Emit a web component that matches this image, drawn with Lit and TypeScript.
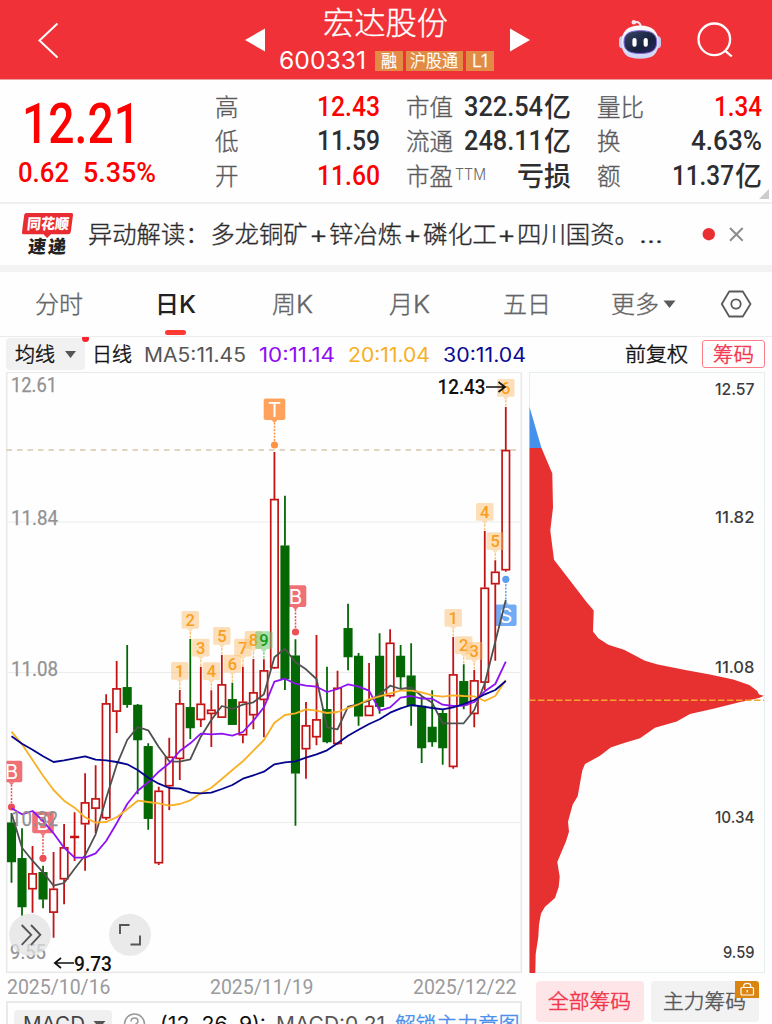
import { LitElement, html, svg, css } from "lit";
import { customElement } from "lit/decorators.js";

type Candle = [up: boolean, high: number, top: number, bottom: number, low: number];

const label = (cls: string, text: string, w: number, h: number, base: number) => html`
  <svg class="t ${cls}" width=${w} height=${h}><text x="0" y=${base} textLength=${w} lengthAdjust="spacingAndGlyphs">${text}</text></svg>`;

const textStyles = css`
  :host { display: block; }
  .t { display: block; flex: none; overflow: visible; fill: currentColor; font-family: Roboto, "Noto Sans CJK SC", sans-serif; white-space: pre; }
  .cjk { font-family: "Noto Sans CJK SC", sans-serif; }
  .inter { font-family: Inter, "Noto Sans CJK SC", sans-serif; }
  .soft { font-weight: 300; stroke: currentColor; stroke-width: 0.35px; }
`;

@customElement("stock-header")
class StockHeader extends LitElement {
  static styles = [textStyles, css`
    header { height: 79px; background: #f03137; border-bottom: 1px solid #e9a0a2; color: #fff; display: grid; grid-template-columns: 245px 20px 242px 23px 89px 42px 36px 38px; box-sizing: content-box; }
    header > svg { display: block; }
    .mid { display: flex; flex-direction: column; align-items: center; }
    .title { font-size: 31px; margin-right: 2px; }
    .sub { display: flex; align-items: flex-start; }
    .code { font-size: 24px; margin-right: 9px; font-weight: 400; }
    .tag { background: #e18b45; height: 20px; display: flex; justify-content: center; margin-right: 3px; }
    .tag:last-child { margin-right: 0; }
    .w1 { width: 28px; } .w3 { width: 57px; } .wl { width: 28px; }
    .tagtext { font-size: 17px; }
  `];
  render() {
    return html`<header>
      <svg width="245" height="79"><path d="M57.5 23.5L39.5 40.5L57.5 57.5" fill="none" stroke="#fff" stroke-width="2"/></svg>
      <svg width="20" height="79"><path d="M0 40L20 28.5V51.5Z" fill="#fff"/></svg>
      <div class="mid">
        ${label("title cjk soft", "宏达股份", 125, 51, 34)}
        <div class="sub">
          ${label("code inter", "600331", 87, 20, 18)}
          <div class="tag w1">${label("tagtext cjk soft", "融", 16, 20, 16)}</div>
          <div class="tag w3">${label("tagtext cjk soft", "沪股通", 48, 20, 16)}</div>
          <div class="tag wl">${label("tagtext inter soft", "L1", 16, 20, 16)}</div>
        </div>
      </div>
      <svg width="23" height="79"><path d="M23 40L3 28.5V51.5Z" fill="#fff"/></svg>
      <span></span>
      <svg width="42" height="79" viewBox="619 0 42 79">
        <defs>
          <linearGradient id="shell" x2="0" y2="1"><stop stop-color="#fff"/><stop offset="1" stop-color="#ccd2f5"/></linearGradient>
          <linearGradient id="face" x2="1" y2="1"><stop stop-color="#384766"/><stop offset=".6" stop-color="#17213d"/><stop offset="1" stop-color="#2a2668"/></linearGradient>
        </defs>
        <path d="M633.5 22.5Q640.5 20.5 640.6 27" fill="none" stroke="#f7eaf2" stroke-width="2"/>
        <circle cx="633.8" cy="22.3" r="2.2" fill="#f4e8ee"/>
        <rect x="619" y="36" width="8" height="12.5" rx="4" fill="#c9c9ed"/>
        <rect x="653" y="36" width="8" height="12.5" rx="4" fill="#c9c9ed"/>
        <path d="M640 25.5C653 25.5 658.5 32 658.5 42C658.5 54 653 58.8 640 58.8S621.5 54 621.5 42C621.5 32 627 25.5 640 25.5Z" fill="url(#shell)"/>
        <path d="M640.3 30.7C652 30.7 656.7 34 656.7 42C656.7 50 652 53.5 640.3 53.5S624 50 624 42C624 34 629 30.7 640.3 30.7Z" fill="url(#face)" stroke="#7a62dc" stroke-width="1"/>
        <rect x="632.4" y="38" width="4.2" height="8.8" rx="2" fill="#fff"/>
        <rect x="643.6" y="38" width="4.2" height="8.8" rx="2" fill="#fff"/>
      </svg>
      <span></span>
      <svg width="38" height="79" viewBox="697 0 38 79"><g fill="none" stroke="#fff" stroke-width="2.3"><circle cx="714.3" cy="39.3" r="15.8"/><path d="M725.3 50.8L731.8 56.5"/></g></svg>
    </header>`;
  }
}

@customElement("quote-panel")
class QuotePanel extends LitElement {
  static styles = [textStyles, css`
    section { height: 122px; position: relative; display: grid; grid-template-columns: 189px 165px 165px 165px; column-gap: 26px; color: #2e2e30; border-bottom: 2px solid #efefef; }
    .main { color: #fd0100; }
    .price { font-size: 55.5px; font-weight: 500; margin-left: 21.5px; }
    .change { display: flex; gap: 14px; padding-left: 18px; }
    .num { font-size: 27px; font-weight: 500; }
    .unit { font-size: 27px; font-weight: 500; margin-left: 1px; }
    .col { padding-top: 10px; }
    .row { height: 34.3px; display: flex; justify-content: space-between; }
    .name { font-size: 23.5px; color: #5a5a5c; }
    .pair { display: flex; }
    .up { color: #fd0100; }
    .ttm { font-size: 15.5px; font-weight: 300; color: #666; margin-left: 2px; }
    .corner { position: absolute; right: 3px; bottom: 3px; width: 10px; height: 10px; background: #ccc; clip-path: polygon(100% 0, 100% 100%, 0 100%); }
  `];
  val(v: any[]) {
    const [txt, w, up, unit] = v;
    return html`<div class="pair ${up ? "up" : ""}">${txt ? label("num", txt, w, 34, 26) : ""}${unit ? label("unit cjk", unit, unit.length * 27, 34, 26.5) : ""}</div>`;
  }
  render() {
    const cols: any[][][] = [
      [["高", ["12.43", 63, true]], ["低", ["11.59", 63]], ["开", ["11.60", 63, true]]],
      [["市值", ["322.54", 79, false, "亿"]], ["流通", ["248.11", 79, false, "亿"]], ["市盈", ["", 0, false, "亏损"]]],
      [["量比", ["1.34", 48, true]], ["换", ["4.63%", 71]], ["额", ["11.37", 62, false, "亿"]]],
    ];
    return html`<section>
      <div class="main">
        ${label("price", "12.21", 118, 80, 62.5)}
        <div class="change">${label("num", "0.62", 51, 30, 22)}${label("num", "5.35%", 73, 30, 22)}</div>
      </div>
      ${cols.map(c => html`<div class="col">${c.map(([n, v]) => html`<div class="row">
        <div class="pair">${label("name cjk soft", n, n.length * 23.5, 34, 26)}${n === "市盈" ? label("ttm inter", "TTM", 31, 34, 20.5) : ""}</div>${this.val(v)}</div>`)}</div>`)}
      <i class="corner"></i>
    </section>`;
  }
}

@customElement("news-strip")
class NewsStrip extends LitElement {
  static styles = [textStyles, css`
    section { height: 61px; border-bottom: 7px solid #f3f3f3; display: grid; grid-template-columns: 88px 614px 28px 1fr; }
    svg { display: block; overflow: visible; }
    .news { font: 300 24.3px Inter, "Noto Sans CJK SC", sans-serif; fill: #2c2c2e; stroke: #2c2c2e; stroke-width: 0.35px; }
    .logo { font: 900 18px "Noto Sans CJK SC", sans-serif; }
  `];
  render() {
    const parts: [string, number, number][] = [
      ["异动解读：", 88, 121.5], ["多龙铜矿", 210.5, 97], ["+", 309, 19], ["锌冶炼", 329, 73], ["+", 403, 19],
      ["磷化工", 423, 74], ["+", 497, 19], ["四川国资。", 517, 122], ["…", 639, 24],
    ];
    return html`<section>
      <svg width="88" height="61" viewBox="0 204 88 61" class="logo">
        <path d="M26.5 213H71.5Q73.4 213 73 215L70.8 232Q70.4 234.3 68 234.3H51L47 238L43.5 234.3H24Q21.7 234.3 22 232L24.2 215Q24.5 213 26.5 213Z" fill="#e82c31"/>
        <text transform="translate(26.5 229.3) skewX(-6)" font-size="14.5" textLength="42" lengthAdjust="spacingAndGlyphs" fill="#fff">同花顺</text>
        <text transform="translate(27.5 253) skewX(-6)" textLength="18" lengthAdjust="spacingAndGlyphs" fill="#222">速</text>
        <text transform="translate(47.5 253) skewX(-6)" textLength="18" lengthAdjust="spacingAndGlyphs" fill="#222">递</text>
      </svg>
      <svg width="614" height="61" viewBox="88 204 614 61" class="news">
        ${parts.map(([s, x, w]) => svg`<text x=${x} y="243" textLength=${w} lengthAdjust="spacingAndGlyphs">${s}</text>`)}
      </svg>
      <svg width="28" height="61" viewBox="702 204 28 61"><circle cx="708.8" cy="234.2" r="6.2" fill="#e92f31"/></svg>
      <svg width="42" height="61" viewBox="730 204 42 61"><path d="M730 228L742.7 240.7M742.7 228L730 240.7" stroke="#8c8c8c" stroke-width="2" fill="none"/></svg>
    </section>`;
  }
}

@customElement("period-tabs")
class PeriodTabs extends LitElement {
  static styles = [textStyles, css`
    nav { height: 64px; border-bottom: 1px solid #ebebeb; display: grid; grid-template-columns: 117px 117px 117px 117px 117px 187px; color: #646466; }
    .tab { display: flex; flex-direction: column; align-items: center; }
    .tab .pair { display: flex; }
    .zh { font-size: 24px; }
    .k { font-size: 24px; }
    .active { color: #222224; }
    .active .zh, .active .k { font-weight: 500; }
    .bar { width: 21px; height: 5px; border-radius: 2.5px; background: #fc3a32; margin-top: 1px; }
    .more { display: flex; padding-left: 25.5px; }
  `];
  render() {
    const tabs = ["分时", "日K", "周K", "月K", "五日"];
    return html`<nav>
      ${tabs.map((t, i) => {
        const soft = i === 1 ? "" : "soft";
        return html`<div class="tab ${i === 1 ? "active" : ""}">
        <div class="pair">${t.endsWith("K") ? html`${label("zh cjk " + soft, t[0], 24, 57, 41)}${label("k inter " + soft, "K", 17, 57, 41)}` : label("zh cjk " + soft, t, 48, 57, 41)}</div>
        ${i === 1 ? html`<i class="bar"></i>` : ""}</div>`;
      })}
      <div class="more">${label("zh cjk soft", "更多", 48, 57, 41)}
        <svg width="110" height="60" viewBox="659 272 110 60"><path d="M663.5 300.5H675.5L669.5 308Z" fill="#5a5a5c"/>
          <g fill="none" stroke="#5a5a5c" stroke-width="1.8"><path d="M729.2 291.5H742.8L750.5 304L742.8 316.5H729.2L721.8 304Z" stroke-linejoin="round"/><circle cx="736" cy="304" r="4.7"/></g></svg>
      </div>
    </nav>`;
  }
}

@customElement("ma-legend")
class MaLegend extends LitElement {
  static styles = [textStyles, css`
    section { height: 35px; display: flex; padding-left: 6px; overflow: hidden; }
    .pick { width: 79px; height: 32px; margin-top: 1px; background: #f1f1f1; border-radius: 4px; display: flex; padding-left: 9px; box-sizing: border-box; position: relative; }
    .pick svg { flex: none; }
    .dot { position: absolute; right: -4px; top: -3px; width: 7px; height: 7px; border-radius: 50%; background: #fb2230; }
    .txt { font-size: 19.5px; font-weight: 400; }
    .zh { font-size: 20px; color: #111; stroke-width: 0.5px; }
    .day { margin-left: 6.5px; }
    .m5 { margin-left: 12px; color: #555; } .m10 { margin-left: 13px; color: #8f0df5; } .m20 { margin-left: 13px; color: #f7b023; } .m30 { margin-left: 13px; color: #0b0a94; }
    .adj { margin-left: 99px; }
    .chips { width: 63.5px; height: 28px; margin: 3px 0 0 14px; border: 1px solid #ff7d88; border-radius: 3px; box-sizing: border-box; display: flex; justify-content: center; color: #f4374e; }
    .chips .zh { color: inherit; }
  `];
  render() {
    return html`<section>
      <div class="pick">${label("zh cjk soft", "均线", 40, 32, 23.5)}<svg width="26" height="32"><path d="M10 13H21L15.5 20Z" fill="#555"/></svg><i class="dot"></i></div>
      ${label("zh cjk soft day", "日线", 40, 35, 25)}
      ${label("txt inter m5", "MA5:11.45", 102, 35, 25)}
      ${label("txt inter m10", "10:11.14", 76, 35, 25)}
      ${label("txt inter m20", "20:11.04", 82, 35, 25)}
      ${label("txt inter m30", "30:11.04", 83, 35, 25)}
      ${label("zh cjk soft adj", "前复权", 63, 35, 25)}
      <div class="chips">${label("zh cjk soft", "筹码", 41, 26, 21)}</div>
    </section>`;
  }
}

const U = true, D = false;
const candles: Candle[] = [
  [D, 813.3, 822.7, 862, 882.7], [D, 828.3, 858.3, 907, 915.7], [U, 846, 873.3, 889.3, 912.7], [D, 865.7, 872.3, 899.3, 908.3],
  [U, 852, 888.7, 912.7, 937.7], [U, 824, 847.3, 879.3, 904.3], [U, 812.3, 836, 838, 861], [U, 773.3, 802.3, 824.3, 870.7],
  [U, 765.3, 798.3, 808.7, 833], [U, 694.3, 703.3, 818.3, 820], [U, 661, 688.3, 711.7, 733], [D, 645, 687.3, 704.7, 707.7],
  [D, 704, 705, 740, 794.3], [D, 743.3, 746.3, 818.7, 829.7], [U, 786.7, 790.7, 863.3, 865], [U, 737.7, 756.7, 786.3, 810],
  [U, 690, 703.3, 759, 780], [D, 639, 707.3, 728, 739], [U, 666.7, 703.7, 720, 727], [U, 690.3, 709.7, 714, 747],
  [U, 655, 684.3, 717.7, 718], [D, 682.7, 699.3, 724.7, 724.7], [U, 666.7, 701.7, 735.3, 743.3], [U, 659, 692.3, 715.3, 729.3],
  [U, 659.3, 670.3, 700, 737.3], [U, 452, 499, 668.3, 669], [D, 495.7, 545.7, 679, 690], [D, 639.3, 655.7, 773.3, 825.7],
  [U, 702, 725.3, 749.3, 778.7], [U, 635, 719.3, 737.3, 745.3], [D, 666.7, 709.3, 742, 743.3], [U, 670.7, 687.7, 744, 744.7],
  [D, 603.7, 628.3, 657, 670.3], [D, 653, 656, 716.3, 725.7], [U, 663, 705.7, 716, 716], [D, 633.3, 656, 706.7, 713.7],
  [U, 629.3, 642.7, 696.3, 697.7], [D, 645, 656, 677, 688], [D, 643.3, 675.7, 706, 725.7], [D, 696.7, 706, 748, 763],
  [D, 690.3, 727, 742, 746.7], [D, 708.7, 713.3, 748, 764.7], [U, 637, 674.3, 767, 768.7], [D, 664.3, 681.3, 705.3, 709.3],
  [U, 670, 680.3, 714, 727.3], [U, 531, 587.7, 682.7, 690], [U, 560.3, 571.7, 584.3, 660.7], [U, 407, 450, 570.3, 571.7],
];
const ma: [string, number[]][] = [
  ["#505050", [813.3, 847.7, 860.7, 872.3, 885.7, 883, 868.7, 855.3, 834.3, 798.3, 765, 740, 727, 730.3, 747, 761.3, 761.7, 759.3, 736.7, 720, 706, 709, 704.7, 702.3, 694.3, 657.3, 648.7, 662.3, 669.3, 679, 727.3, 729.3, 706.7, 704, 700.7, 694.3, 685.7, 689, 687.3, 696, 702.7, 723.3, 723.3, 723.3, 710, 683.3, 641.7, 600]],
  ["#8f12f2", [808.3, 814.3, 811, 821, 833.3, 847.7, 857.7, 857.7, 853.3, 841, 823.3, 804, 790.7, 782.3, 771.7, 763.3, 751, 743.3, 733.7, 734.3, 733.7, 735.7, 732, 720.7, 707.3, 681.7, 678.7, 683.7, 685.7, 686.7, 692, 689, 684.3, 686.7, 690.7, 710.7, 707.3, 697.7, 696, 698.7, 698.7, 704.7, 706, 705.7, 702, 691.3, 684, 661.7]],
  ["#f8b024", [731.7, 744.3, 760, 775.7, 790, 800.7, 807.7, 817.3, 822.7, 822, 817.3, 809.3, 800.7, 802, 803.3, 805.7, 804, 800.3, 793.3, 787.7, 779, 770, 761.3, 750.7, 740, 722.7, 715, 713.3, 709.3, 710.7, 713, 712, 708, 704.3, 699.3, 696.3, 693.3, 690.7, 690.7, 692.3, 695.3, 696.7, 695.3, 696, 696.3, 701, 696, 680]],
  ["#04048c", [736.3, 743.7, 749.7, 756.3, 762, 760.3, 758.3, 756.3, 759.7, 760.3, 762, 764.3, 770, 777.7, 783.7, 788, 788.7, 792.7, 793.3, 792.7, 789, 785, 778.7, 775.3, 771.7, 764.3, 762.3, 761.3, 757.7, 754.3, 750.3, 743.3, 735.7, 729.7, 724, 719.3, 712.7, 708.3, 705, 706.3, 708, 709.3, 707.3, 704, 700, 694.3, 690, 681]],
];
const cx = (i: number) => 11.5 + 10.517 * i;
const counts: [number, string][] = [[16, "1"], [17, "2"], [18, "3"], [19, "4"], [20, "5"], [21, "6"], [22, "7"], [23, "8"], [24, "9"], [42, "1"], [43, "2"], [44, "3"], [45, "4"], [46, "5"], [47, "6"]];

@customElement("k-chart")
class KChart extends LitElement {
  static styles = [textStyles, css`
    svg { display: block; font-family: Roboto, sans-serif; }
    .axis { font-size: 20px; font-weight: 400; fill: #929294; stroke: #929294; stroke-width: 0.25px; }
    .mark { font-size: 20px; font-weight: 500; fill: #111; }
    .sig { font: 400 20.5px Inter, sans-serif; fill: #fff; text-anchor: middle; }
    .cnt { font-size: 16.5px; font-weight: 500; text-anchor: middle; }
  `];
  signal(x: number, y: number, dot: number, ch: string, col: string, dotCol: string) {
    const below = dot < y;
    return svg`<g>
      <rect x=${x - 10.8} y=${y} width="21.6" height="21.6" rx="2" fill=${col}/>
      <path d=${below ? `M${x - 3} ${y}L${x} ${y - 3}L${x + 3} ${y}Z` : `M${x - 3} ${y + 21.6}L${x} ${y + 24.6}L${x + 3} ${y + 21.6}Z`} fill=${col}/>
      <path d=${below ? `M${x} ${dot + 5}V${y - 3}` : `M${x} ${y + 24}V${dot - 4}`} stroke=${dotCol} stroke-width="1.5" stroke-dasharray="2 1.3"/>
      <circle cx=${x} cy=${dot} r="3.6" fill=${dotCol}/>
      <text class="sig" x=${x} y=${y + 18.5}>${ch}</text></g>`;
  }
  count(i: number, ch: string) {
    const x = cx(i), hi = candles[i][1], y = hi - 28, green = ch === "9";
    const col = green ? "#6cc76f" : "#fbbe6c";
    return svg`<g><g fill=${col} fill-opacity=${green ? 0.55 : 0.48}><path d="M${x - 7.2} ${y}h14.4q1.5 0 1.5 1.5v14.8q0 1.5 -1.5 1.5h-4.2l-3 3.4l-3 -3.4h-4.2q-1.5 0 -1.5 -1.5v-14.8q0 -1.5 1.5 -1.5Z"/></g>
      <path d="M${x} ${y + 21}V${hi}" stroke=${col} stroke-width="1.3" stroke-dasharray="2.5 1.2"/>
      <text class="cnt" x=${x} y=${y + 15} fill=${green ? "#159a18" : "#fa9d1c"}>${ch}</text></g>`;
  }
  axis(s: string, x: number, y: number, w: number) {
    return svg`<text class="axis" x=${x} y=${y} textLength=${w} lengthAdjust="spacingAndGlyphs">${s}</text>`;
  }
  render() {
    return html`<svg width="529" height="602" viewBox="0 372 529 602">
      <defs><clipPath id="plot"><rect x="6.5" y="372" width="515" height="601"/></clipPath></defs>
      <path d="M7 522H521M7 672.5H521M7 822.5H521" stroke="#ececec" stroke-width="1.2"/>
      <rect x="6.7" y="372.3" width="514.6" height="600" fill="none" stroke="#e9e9e9" stroke-width="1.6"/>
      <path d="M6.5 450H517" stroke="#d9c8ac" stroke-width="1.4" stroke-dasharray="5.5 5"/>
      <g clip-path="url(#plot)">
        ${this.signal(11.5, 760.7, 807, "B", "#ef7075", "#ec5056")}
        ${this.signal(43, 811.7, 858.3, "B", "#ef7075", "#ec5056")}
        ${this.signal(274.5, 398.5, 445, "T", "#ffa35c", "#fd9345")}
        ${this.signal(295.5, 585.3, 632, "B", "#ef7075", "#ec5056")}
        ${this.signal(505.8, 604.4, 579.3, "S", "#72abf5", "#5c9ff0")}
        ${candles.map(([up, hi, top, bot, lo], i) => {
          const x = cx(i), c = up ? "#c31314" : "#046804";
          return svg`<path d="M${x} ${hi}V${top}M${x} ${bot}V${lo}" stroke=${c} stroke-width="1.8"/>
            <rect x=${x - 3.7} y=${top + 0.6} width="7.4" height=${Math.max(0.6, bot - top - 1.2)} fill=${up ? "none" : c} stroke=${c} stroke-width="1.7"/>`;
        })}
        ${counts.map(([i, ch]) => this.count(i, ch))}
        ${ma.map(([c, ys]) => svg`<polyline points=${ys.map((y, i) => `${cx(i)},${y}`).join(" ")} fill="none" stroke=${c} stroke-width="1.8" stroke-linejoin="round"/>`)}
      </g>
      ${this.axis("12.61", 11, 392, 46)}
      ${this.axis("11.84", 11, 525, 47)}
      ${this.axis("11.08", 11, 675.5, 47)}
      ${this.axis("10.32", 11, 826, 47)}
      ${this.axis("9.55", 10, 958.5, 36)}
      <text class="mark" x="437.5" y="394" textLength="48" lengthAdjust="spacingAndGlyphs">12.43</text>
      <path d="M486 387H504.5M498.5 382L505 387L498.5 392" fill="none" stroke="#111" stroke-width="1.7"/>
      <path d="M74 963H55.5M61 958L54.8 963L61 968" fill="none" stroke="#111" stroke-width="1.7"/>
      <text class="mark" x="74" y="970.5" textLength="38" lengthAdjust="spacingAndGlyphs">9.73</text>
      <circle cx="30" cy="934.8" r="21" fill="#e2e2e2" fill-opacity=".75"/>
      <circle cx="130" cy="934.8" r="21" fill="#e8e8e8" fill-opacity=".9"/>
      <g fill="none" stroke="#555" stroke-width="1.9"><path d="M21.7 925L31.2 934.8L21.7 944.8M31 925L40.3 934.8L31 944.8"/><path d="M120 934V925H129.5M140 935.5V944.5H130.5"/></g>
    </svg>`;
  }
}

const profile: [number, number][] = [[541.5, 448], [552.3, 473.4], [553, 507.6], [550.3, 530.6], [554, 559.8], [570, 580.6], [586.7, 602.3], [593.7, 610.6], [593, 631.5], [598.3, 638.2], [608.3, 644.8], [624, 649.8], [645, 660.7], [657.7, 664.4], [686.7, 670.3], [710, 674.5], [733.3, 679.5], [749.3, 684.9], [757.3, 691], [759, 694.5], [764, 695.7], [759, 698], [738.3, 702.4], [713.3, 708.7], [690, 714], [676.7, 721.6], [655, 727.8], [640, 738.3], [623.3, 743.3], [610.7, 747.5], [600, 755.8], [585, 764], [582.3, 770.4], [577.7, 796.2], [572.7, 804.6], [568, 821.7], [569, 831.7], [566, 841.3], [557.3, 862], [559.7, 876.7], [558.7, 887], [555, 898], [545, 906.8], [541, 913.4], [539, 924.7], [538.3, 937], [535.7, 954], [535.3, 973]];

@customElement("chip-chart")
class ChipChart extends LitElement {
  static styles = [textStyles, css`
    svg { display: block; }
    text { font: 500 16.5px Inter, sans-serif; fill: #3c3c3e; }
  `];
  render() {
    const labels: [string, number, number][] = [["12.57", 715, 395], ["11.82", 715, 522.5], ["11.08", 715, 673], ["10.34", 715, 823.3], ["9.59", 723, 957.8]];
    return html`<svg width="243" height="602" viewBox="529 372 243 602">
      <rect x="529.5" y="372.5" width="235" height="600" fill="none" stroke="#e6edef"/>
      <path d="M529.5 407L541.5 448H529.5Z" fill="#4591ec"/>
      <path d="M529.5 448L${profile.map(p => p.join(" ")).join("L")}L529.5 973Z" fill="#e73030"/>
      <path d="M529 700.3H764" stroke="#f3a42c" stroke-width="1.5" stroke-dasharray="6.5 2.5"/>
      ${labels.map(([s, x, y]) => svg`<text x=${x} y=${y} textLength=${754.5 - x} lengthAdjust="spacingAndGlyphs">${s}</text>`)}
    </svg>`;
  }
}

@customElement("bottom-bar")
class BottomBar extends LitElement {
  static styles = [textStyles, css`
    section { display: grid; grid-template-columns: 529px 243px; height: 50px; overflow: hidden; }
    .left { padding-left: 6px; }
    .dates { height: 27px; display: flex; justify-content: space-between; width: 510.5px; padding-left: 1px; color: #9a9a9c; box-sizing: border-box; }
    .date { font-size: 20px; font-weight: 400; }
    .macd { width: 516px; height: 40px; border: 2px solid #e9e9e9; box-sizing: border-box; display: flex; }
    .pick { width: 98px; height: 30px; margin: 7px 0 0 6px; background: #f0f0f0; border-radius: 4px; display: flex; padding-left: 9px; box-sizing: border-box; color: #444; flex: none; }
    .txt { font-size: 20px; font-weight: 400; }
    .help { width: 42px; flex: none; }
    .p { color: #111; margin-left: 6px; } .v { color: #555; margin-left: 10px; } .link { color: #4a8fec; margin-left: 9.5px; font-size: 20.7px; stroke-width: 0.5px; }
    .right { display: flex; padding: 7px 0 0 6.5px; gap: 7.5px; }
    .btn { height: 40.5px; width: 108px; border-radius: 4px; display: flex; justify-content: center; font-size: 20.5px; position: relative; }
    .all { background: #fde5e8; color: #f2364c; }
    .mainf { background: #f2f2f2; color: #58585a; width: 107.5px; }
    .lock { position: absolute; right: 0; top: 0; width: 24px; height: 17px; background: #da8412; border-radius: 0 3px 0 0; }
    .btxt { stroke-width: 0.5px; }
  `];
  render() {
    return html`<section>
      <div class="left">
        <div class="dates">${label("date", "2025/10/16", 103.5, 27, 19.8)}${label("date", "2025/11/19", 103.5, 27, 19.8)}${label("date", "2025/12/22", 103.5, 27, 19.8)}</div>
        <div class="macd">
          <div class="pick">${label("txt inter", "MACD", 62, 30, 21)}<svg width="25" height="30"><path d="M8.5 11H20.5L14.5 18Z" fill="#555"/></svg></div>
          <svg class="help" width="42" height="30" viewBox="112 1003 42 30"><circle cx="134.5" cy="1024" r="10" fill="none" stroke="#999" stroke-width="1.5"/><path d="M131 1021.5Q131 1018 134.5 1018T138 1021.3Q138 1023.2 134.5 1025V1027" fill="none" stroke="#999" stroke-width="1.5"/></svg>
          ${label("txt inter p", "(12, 26, 9):", 106, 30, 28)}
          ${label("txt inter v", "MACD:0.21", 109, 30, 28)}
          ${label("link cjk soft", "解锁主力意图", 124.5, 30, 29)}
        </div>
      </div>
      <div class="right">
        <div class="btn all">${label("btxt cjk soft", "全部筹码", 83, 40, 27.5)}</div>
        <div class="btn mainf">${label("btxt cjk soft", "主力筹码", 83, 40, 27.5)}
          <svg class="lock" viewBox="0 0 24 17"><g fill="none" stroke="#fff" stroke-width="1.2"><rect x="6" y="6.5" width="12.5" height="7.5" rx="1"/><path d="M8.7 6.5V5Q8.7 2.3 12.2 2.3T15.7 5V6.5M12.2 9V11.5"/></g></svg>
        </div>
      </div>
    </section>`;
  }
}

@customElement("app-root")
class AppRoot extends LitElement {
  static styles = css`
    :host { display: block; width: 772px; height: 1024px; overflow: hidden; background: #fefefe; }
    .charts { display: grid; grid-template-columns: 529px 243px; }
  `;
  render() {
    return html`
      <stock-header></stock-header>
      <quote-panel></quote-panel>
      <news-strip></news-strip>
      <period-tabs></period-tabs>
      <ma-legend></ma-legend>
      <div class="charts"><k-chart></k-chart><chip-chart></chip-chart></div>
      <bottom-bar></bottom-bar>`;
  }
}
